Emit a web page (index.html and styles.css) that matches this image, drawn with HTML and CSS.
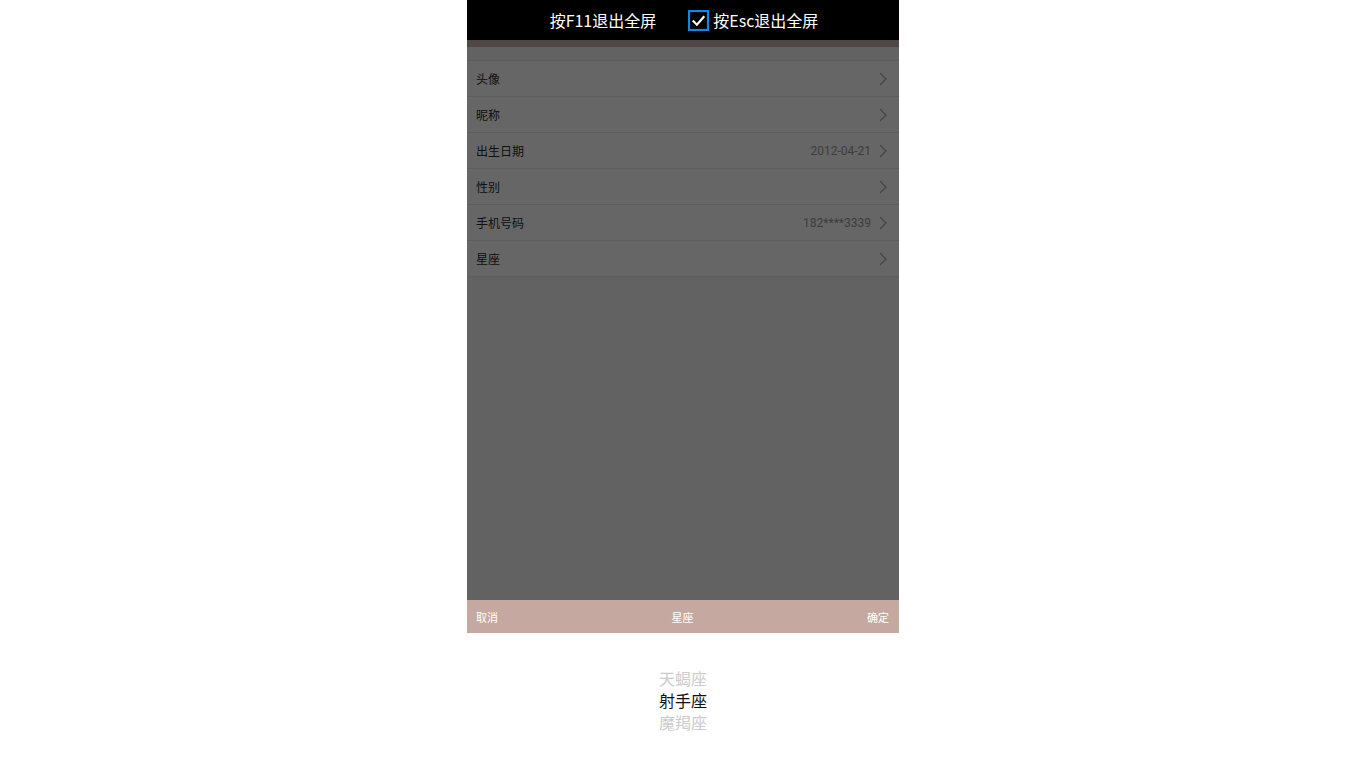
FILE: index.html
```html
<!DOCTYPE html>
<html lang="zh">
<head>
<meta charset="utf-8">
<title>个人资料</title>
<link rel="stylesheet" href="styles.css">
</head>
<body>
<div class="phone">
  <div class="app-header"></div>
  <ul class="list">
    <li class="row"><span class="label">头像</span><span class="value"></span><svg class="chev" viewBox="0 0 8 14"><path d="M1 1 L7 7 L1 13" /></svg></li>
    <li class="row"><span class="label">昵称</span><span class="value"></span><svg class="chev" viewBox="0 0 8 14"><path d="M1 1 L7 7 L1 13" /></svg></li>
    <li class="row"><span class="label">出生日期</span><span class="value">2012-04-21</span><svg class="chev" viewBox="0 0 8 14"><path d="M1 1 L7 7 L1 13" /></svg></li>
    <li class="row"><span class="label">性别</span><span class="value"></span><svg class="chev" viewBox="0 0 8 14"><path d="M1 1 L7 7 L1 13" /></svg></li>
    <li class="row"><span class="label">手机号码</span><span class="value">182****3339</span><svg class="chev" viewBox="0 0 8 14"><path d="M1 1 L7 7 L1 13" /></svg></li>
    <li class="row"><span class="label">星座</span><span class="value"></span><svg class="chev" viewBox="0 0 8 14"><path d="M1 1 L7 7 L1 13" /></svg></li>
  </ul>

  <div class="mask"></div>

  <div class="fs-notice">
    <span class="fs-text">按F11退出全屏</span>
    <span class="fs-check"><svg viewBox="0 0 20 20"><rect x="1" y="1" width="18" height="18" fill="none" stroke="#0a8ae6" stroke-width="2"/><path d="M4.5 10 L8.5 14 L15.5 6" fill="none" stroke="#fff" stroke-width="2"/></svg></span>
    <span class="fs-text">按Esc退出全屏</span>
  </div>

  <div class="sheet">
    <div class="toolbar">
      <span class="tb-btn">取消</span>
      <span class="tb-title">星座</span>
      <span class="tb-btn">确定</span>
    </div>
    <div class="picker">
      <div class="opt">天蝎座</div>
      <div class="opt sel">射手座</div>
      <div class="opt">魔羯座</div>
    </div>
  </div>
</div>
</body>
</html>
```

FILE: styles.css
```css
* { box-sizing: border-box; }
html, body {
  margin: 0;
  padding: 0;
  background: #ffffff;
  font-family: "Noto Sans CJK SC", "Noto Sans", sans-serif;
}
body {
  display: flex;
  justify-content: center;
  height: 768px;
  overflow: hidden;
}
.phone {
  position: relative;
  width: 432px;
  height: 768px;
  background: #f5f5f5;
  overflow: hidden;
}
.app-header {
  height: 47px;
  background: #c9b0a9;
}
.list {
  list-style: none;
  margin: 13px 0 0;
  padding: 0;
  background: #ffffff;
  border-top: 1px solid #e8e8e8;
}
.row {
  display: flex;
  align-items: center;
  height: 36px;
  padding: 0 12px 0 9px;
  border-bottom: 1px solid #e8e8e8;
  font-size: 12px;
}
.label {
  color: #2a2a2a;
  flex: 1;
}
.value {
  color: #9a9a9a;
  font-family: Roboto, "Noto Sans", sans-serif;
  font-size: 12px;
  margin-right: 8px;
}
.chev {
  width: 8px;
  height: 14px;
}
.chev path {
  fill: none;
  stroke: #aaaaaa;
  stroke-width: 1.2;
}
.mask {
  position: absolute;
  left: 0;
  top: 0;
  right: 0;
  bottom: 0;
  background: rgba(0, 0, 0, 0.6);
}
.fs-notice {
  position: absolute;
  left: 0;
  top: 0;
  right: 0;
  height: 40px;
  background: #000;
  color: #fff;
  display: flex;
  align-items: center;
  justify-content: center;
  font-family: "Noto Sans CJK SC", sans-serif;
  font-size: 16px;
  padding-left: 2px;
}
.fs-check {
  display: inline-flex;
  width: 21px;
  height: 21px;
  margin: 0 4px 0 32px;
}
.fs-check svg { width: 21px; height: 21px; }
.sheet {
  position: absolute;
  left: 0;
  right: 0;
  bottom: 0;
  height: 168px;
  background: #ffffff;
}
.toolbar {
  display: flex;
  justify-content: space-between;
  align-items: center;
  height: 33px;
  padding: 0 10px 0 9px;
  background: #c5a9a1;
  color: #ffffff;
  font-size: 11px;
}
.tb-title { font-size: 11px; }
.picker {
  padding-top: 34px;
  display: flex;
  flex-direction: column;
  align-items: center;
}
.opt {
  font-size: 16px;
  line-height: 22px;
  color: #cccccc;
}
.opt.sel { color: #111111; }
```
